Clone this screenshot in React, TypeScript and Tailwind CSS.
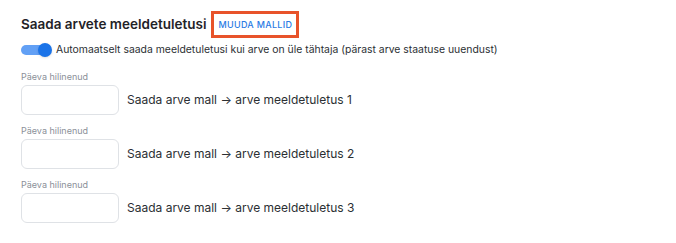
import React from 'react'

const font = { fontFamily: 'Inter, "Noto Sans", sans-serif' }

const Toggle = () => (
  <div className="relative h-[14px] w-[31px] shrink-0">
    <div className="absolute left-0 top-[2px] h-[10px] w-[28px] rounded-full bg-[#62a0f5]" />
    <div className="absolute right-0 top-0 h-[14px] w-[14px] rounded-full bg-[#1a73e8] shadow-sm" />
  </div>
)

const ReminderRow = ({ n }: { n: number }) => (
  <div className="flex flex-col">
    <label className="text-[9px] leading-[12px] text-[#8b9099]">Päeva hilinenud</label>
    <div className="mt-[2px] flex items-center gap-[8px]">
      <input className="h-[30px] w-[98px] rounded-md border border-[#dfe2e6] bg-white outline-none" />
      <span className="text-[12px] text-[#2b2f33]">Saada arve mall → arve meeldetuletus {n}</span>
    </div>
  </div>
)

export default function App() {
  return (
    <div className="min-h-[243px] w-[676px] bg-white pl-[21px] pt-[11px]" style={font}>
      <div className="flex h-[27px] items-center gap-[5px]">
        <h2 className="text-[13.5px] font-semibold text-[#1f2328]">Saada arvete meeldetuletusi</h2>
        <div className="flex h-[27px] items-center border-[3px] border-[#e8532a] px-[4px]">
          <span className="text-[9px] font-medium uppercase tracking-[0.3px] text-[#2a7be4]">Muuda mallid</span>
        </div>
      </div>
      <div className="mt-[4px] flex h-[16px] items-center gap-[4px]">
        <Toggle />
        <span className="text-[10.4px] text-[#2b2f33]">
          Automaatselt saada meeldetuletusi kui arve on üle tähtaja (pärast arve staatuse uuendust)
        </span>
      </div>
      <div className="mt-[13px] flex flex-col gap-[10px]">
        <ReminderRow n={1} />
        <ReminderRow n={2} />
        <ReminderRow n={3} />
      </div>
    </div>
  )
}
